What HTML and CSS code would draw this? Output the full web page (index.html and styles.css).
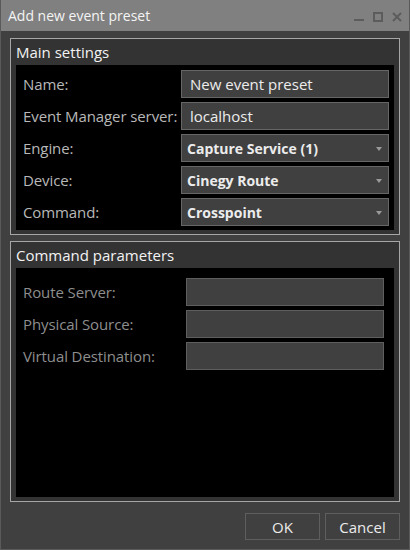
FILE: index.html
```html
<!DOCTYPE html>
<html lang="en">
<head>
  <meta charset="UTF-8">
  <meta name="viewport" content="width=device-width, initial-scale=1.0">
  <title>Add new event preset</title>
  <link rel="stylesheet" href="styles.css">
</head>
<body>
  <div class="window">
    <div class="titlebar">
      <span class="title">Add new event preset</span>
      <div class="controls">
        <svg width="10" height="10" viewBox="0 0 10 10"><rect x="0" y="7" width="10" height="2" fill="#5c5c5c"/></svg>
        <svg width="10" height="10" viewBox="0 0 10 10"><rect x="1" y="1" width="8" height="8" fill="none" stroke="#5c5c5c" stroke-width="2"/></svg>
        <svg width="10" height="10" viewBox="0 0 10 10"><path d="M1 1 L9 9 M9 1 L1 9" stroke="#5c5c5c" stroke-width="2"/></svg>
      </div>
    </div>

    <div class="content">
      <div class="group">
        <div class="group-title">Main settings</div>
        <div class="group-body main">
          <label>Name:</label>
          <div class="field">New event preset</div>
          <label>Event Manager server:</label>
          <div class="field">localhost</div>
          <label>Engine:</label>
          <div class="field combo">Capture Service (1)<span class="arrow"></span></div>
          <label>Device:</label>
          <div class="field combo">Cinegy Route<span class="arrow"></span></div>
          <label>Command:</label>
          <div class="field combo">Crosspoint<span class="arrow"></span></div>
        </div>
      </div>

      <div class="group second">
        <div class="group-title">Command parameters</div>
        <div class="group-body params">
          <label>Route Server:</label>
          <div class="field empty"></div>
          <label>Physical Source:</label>
          <div class="field empty"></div>
          <label>Virtual Destination:</label>
          <div class="field empty"></div>
        </div>
      </div>

      <div class="buttons">
        <button>OK</button>
        <button>Cancel</button>
      </div>
    </div>
  </div>
</body>
</html>
```

FILE: styles.css
```css
* { box-sizing: border-box; }
body { margin: 0; background: #404040; font-family: "Open Sans", "Noto Sans", sans-serif; font-size: 15px; }
.window { width: 410px; height: 550px; border: 1px solid #5a5a5a; border-top: none; background: #404040; display: flex; flex-direction: column; }
.titlebar { height: 31px; background: #808080; display: flex; align-items: center; justify-content: space-between; padding: 0 7px 0 7px; }
.title { color: #f4f4f4; font-size: 14px; }
.controls { display: flex; gap: 9px; align-items: center; padding-top: 2px; }
.content { padding: 7px 9px 0 9px; }
.group { border: 1px solid #a6a6a6; background: #333333; padding: 0 5px 4px 5px; }
.group.second { margin-top: 6px; }
.group-title { height: 26px; line-height: 26px; color: #f2f2f2; font-size: 15px; }
.group-body { background: #000; display: grid; row-gap: 4px; align-content: start; }
.main { height: 165px; padding: 5px 5px 0 7px; grid-template-columns: 158px 1fr; grid-auto-rows: 28px; }
.params { height: 229px; padding: 10px 10px 0 7px; grid-template-columns: 163px 1fr; grid-auto-rows: 28px; }
label { color: #b8b8b8; display: flex; align-items: center; white-space: nowrap; letter-spacing: -0.1px; }
.params label { color: #8e8e8e; }
.field { background: #404040; border: 1px solid #666; color: #ececec; display: flex; align-items: center; padding-left: 8px; font-size: 15px; position: relative; }
.field.combo { font-weight: bold; padding-left: 5px; font-size: 14px; }
.field.empty { border-color: #5e5e5e; }
.arrow { position: absolute; right: 6px; top: 12px; width: 0; height: 0; border-left: 3px solid transparent; border-right: 3px solid transparent; border-top: 4px solid #9a9a9a; }
.buttons { display: flex; justify-content: flex-end; gap: 5px; margin-top: 11px; }
button { width: 75px; height: 27px; background: #404040; border: 1px solid #5e5e5e; color: #ececec; font-family: inherit; font-size: 15px; padding: 0; }
```
